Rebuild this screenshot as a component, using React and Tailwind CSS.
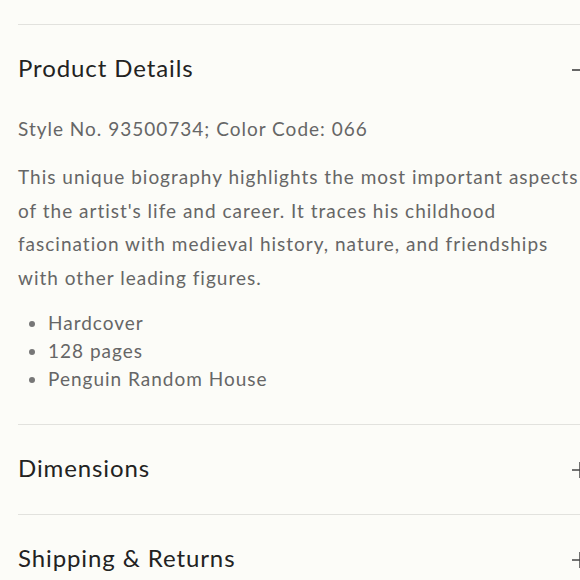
export default function App() {
  const font = { fontFamily: "Lato, 'Open Sans', sans-serif" };
  return (
    <div className="w-[580px] h-[580px] overflow-hidden bg-[#fcfcf8]" style={font}>
      <div className="w-[620px] pl-[18px] pt-[24px]">
        <div className="border-t border-[#e2e2de]">
          <div className="h-[89px] pb-[4px] flex items-center justify-between pr-[32px]">
            <span className="text-[24px] tracking-[0.9px] text-[#222]">Product Details</span>
            <span className="block mt-[5px] w-[16px] h-[2px] bg-[#666]"></span>
          </div>
          <div className="text-[19px] tracking-[1px] text-[#666]">
            <p className="leading-[30px] whitespace-nowrap">Style No. 93500734; Color Code: 066</p>
            <p className="mt-[16px] leading-[33.5px] whitespace-nowrap">
              This unique biography highlights the most important aspects<br />
              of the artist's life and career. It traces his childhood<br />
              fascination with medieval history, nature, and friendships<br />
              with other leading figures.
            </p>
            <ul className="mt-[15px] leading-[28px] list-disc pl-[30px] marker:text-[#777]">
              <li>Hardcover</li>
              <li>128 pages</li>
              <li>Penguin Random House</li>
            </ul>
          </div>
        </div>
        <div className="mt-[31px] border-t border-[#e2e2de]">
          <div className="h-[89px] pb-[4px] flex items-center justify-between pr-[32px]">
            <span className="text-[24px] tracking-[0.9px] text-[#222]">Dimensions</span>
            <PlusIcon />
          </div>
        </div>
        <div className="border-t border-[#e2e2de]">
          <div className="h-[89px] pb-[4px] flex items-center justify-between pr-[32px]">
            <span className="text-[24px] tracking-[0.9px] text-[#222]">Shipping &amp; Returns</span>
            <PlusIcon />
          </div>
        </div>
      </div>
    </div>
  );
}

function PlusIcon() {
  return (
    <svg width="16" height="16" viewBox="0 0 16 16" className="shrink-0 mt-[5px]">
      <path d="M0 8H16M8 0V16" stroke="#444" strokeWidth="1.5" />
    </svg>
  );
}
